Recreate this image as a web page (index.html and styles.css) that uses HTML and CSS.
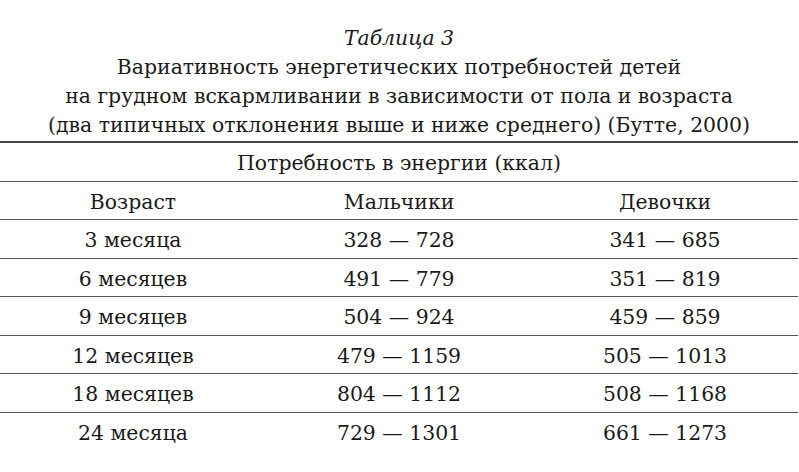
FILE: index.html
```html
<!DOCTYPE html>
<html lang="ru">
<head>
<meta charset="utf-8">
<title>Таблица 3</title>
<link rel="stylesheet" href="styles.css">
</head>
<body>
<div class="page">
  <div class="caption">
    <div class="caption-num">Таблица 3</div>
    <div class="caption-line">Вариативность энергетических потребностей детей</div>
    <div class="caption-line">на грудном вскармливании в зависимости от пола и возраста</div>
    <div class="caption-line">(два типичных отклонения выше и ниже среднего) (Бутте, 2000)</div>
  </div>
  <table class="data">
    <thead>
      <tr class="top"><th colspan="3">Потребность в энергии (ккал)</th></tr>
      <tr><th>Возраст</th><th>Мальчики</th><th>Девочки</th></tr>
    </thead>
    <tbody>
      <tr><td>3 месяца</td><td>328 — 728</td><td>341 — 685</td></tr>
      <tr><td>6 месяцев</td><td>491 — 779</td><td>351 — 819</td></tr>
      <tr><td>9 месяцев</td><td>504 — 924</td><td>459 — 859</td></tr>
      <tr><td>12 месяцев</td><td>479 — 1159</td><td>505 — 1013</td></tr>
      <tr><td>18 месяцев</td><td>804 — 1112</td><td>508 — 1168</td></tr>
      <tr class="last"><td>24 месяца</td><td>729 — 1301</td><td>661 — 1273</td></tr>
    </tbody>
  </table>
</div>
</body>
</html>
```

FILE: styles.css
```css
html, body {
  margin: 0;
  padding: 0;
  background: #fff;
}
body {
  font-family: "DejaVu Serif", "Liberation Serif", serif;
  color: #1a1a1a;
  font-size: 20.4px;
}
.page {
  width: 798px;
  padding-top: 24px;
}
.caption {
  text-align: center;
  line-height: 29px;
  padding-bottom: 1px;
}
.caption-num {
  font-style: italic;
}
.data {
  width: 798px;
  border-collapse: collapse;
  table-layout: fixed;
  border-top: 2px solid #444;
}
.data th, .data td {
  font-weight: normal;
  text-align: center;
  height: 35px;
  padding: 2.5px 0 0 0;
  vertical-align: middle;
  border-bottom: 1.5px solid #555;
}
.data tr.last td {
  border-bottom: none;
}
```
